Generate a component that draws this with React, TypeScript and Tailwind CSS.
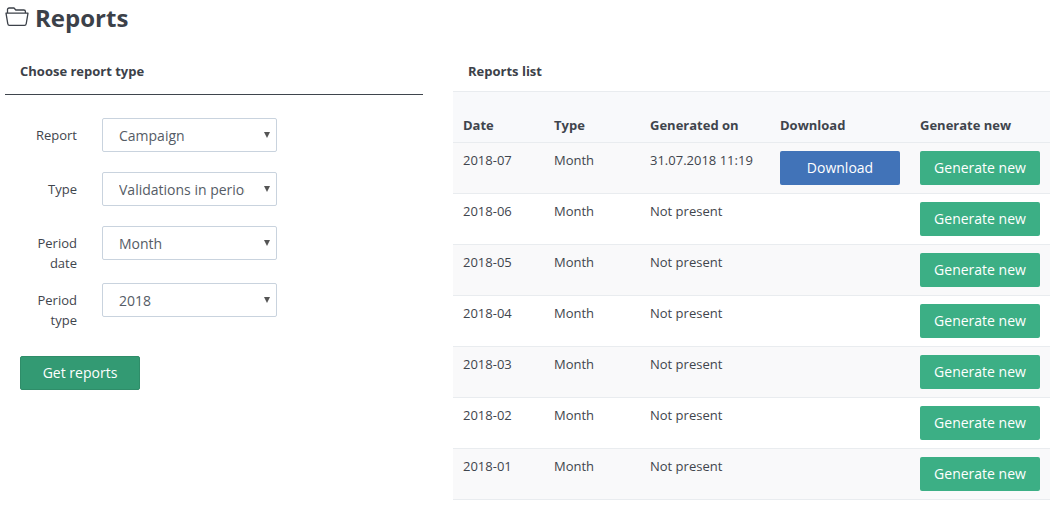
import React from "react";

const font = { fontFamily: '"Open Sans", sans-serif' };

function Folder() {
  return (
    <svg width="24" height="20" viewBox="0 0 24 20" fill="none" stroke="#3c4149" strokeWidth="1.3" className="shrink-0 mb-[4px]">
      <path d="M2.5 6V2.6C2.5 1.7 3.2 1 4.1 1H9L10.8 3H18.8C19.7 3 20.4 3.7 20.4 4.6V6" strokeLinejoin="round" />
      <path d="M1 6.2H23L21.2 16.8C21.1 17.7 20.4 18.4 19.5 18.4H4.5C3.6 18.4 2.9 17.7 2.8 16.8L1 6.2Z" strokeLinejoin="round" />
    </svg>
  );
}

function Field({ label, value, h }: { label: React.ReactNode; value: string; h: string }) {
  return (
    <div className={`flex items-start ${h}`}>
      <label className="w-[72px] text-right text-[13px] leading-[20px] pt-[7px] text-[#3f454d]">{label}</label>
      <div className="relative ml-[25px] w-[175px] h-[34px]">
        <select
          defaultValue={value}
          className="block w-full h-full appearance-none bg-white border border-[#c9d3de] rounded-[2px] pl-[16px] pr-[31px] text-[14px] text-[#555c66] outline-none"
          style={font}
        >
          <option>{value}</option>
        </select>
        <span className="absolute right-[7px] top-[14px] w-0 h-0 border-x-[3px] border-x-transparent border-t-[6px] border-t-[#555]" />
      </div>
    </div>
  );
}

const rows = ["2018-07", "2018-06", "2018-05", "2018-04", "2018-03", "2018-02", "2018-01"];

function Btn({ children, color }: { children: React.ReactNode; color: string }) {
  return (
    <button className={`w-[120px] h-[34px] rounded-[2px] text-white text-[14px] pb-[2px] ${color}`}>{children}</button>
  );
}

export default function App() {
  return (
    <div className="w-[1057px] h-[513px] overflow-hidden bg-white text-[#3f454d] text-[13px]" style={font}>
      <div className="flex items-center h-[38px] pl-[5px] gap-[6px]">
        <Folder />
        <h1 className="text-[24px] font-bold text-[#3c4149] leading-[38px] pb-[3px]">Reports</h1>
      </div>
      <div className="flex pl-[5px] pr-[7px] gap-[30px]">
        <div className="w-[418px]">
          <div className="h-[57px] border-b border-[#3f454d] pl-[15px] pt-[23px] font-bold text-[13px] leading-[20px] text-[#3c4149]">
            Choose report type
          </div>
          <div className="pt-[23px]">
            <Field label="Report" value="Campaign" h="h-[54px]" />
            <Field label="Type" value="Validations in period" h="h-[54px]" />
            <Field label={<>Period<br />date</>} value="Month" h="h-[57px]" />
            <Field label={<>Period<br />type</>} value="2018" h="h-[73px]" />
          </div>
          <button className="ml-[15px] w-[120px] h-[34px] rounded-[2px] bg-[#339a73] border border-[#2f8d69] text-white text-[14px] pb-[2px]">
            Get reports
          </button>
        </div>
        <div className="w-[597px]">
          <div className="h-[53px] pl-[15px] pt-[23px] font-bold text-[13px] leading-[20px] text-[#3c4149]">
            Reports list
          </div>
          <table className="w-[597px] table-fixed border-collapse">
            <colgroup>
              <col className="w-[91px]" />
              <col className="w-[96px]" />
              <col className="w-[130px]" />
              <col className="w-[140px]" />
              <col className="w-[140px]" />
            </colgroup>
            <thead>
              <tr className="h-[51px] bg-[#f8f9fb] border-t border-b border-[#e9ecef]">
                <th className="text-left align-bottom pl-[10px] pb-[8px] font-bold text-[13px] leading-[18px]">Date</th>
                <th className="text-left align-bottom pl-[10px] pb-[8px] font-bold text-[13px] leading-[18px]">Type</th>
                <th className="text-left align-bottom pl-[10px] pb-[8px] font-bold text-[13px] leading-[18px]">Generated on</th>
                <th className="text-left align-bottom pl-[10px] pb-[8px] font-bold text-[13px] leading-[18px]">Download</th>
                <th className="text-left align-bottom pl-[10px] pb-[8px] font-bold text-[13px] leading-[18px]">Generate new</th>
              </tr>
            </thead>
            <tbody>
              {rows.map((r, i) => (
                <tr key={r} className={`h-[51px] border-b border-[#e9ecef] ${i % 2 === 0 ? "bg-[#f9f9fa]" : "bg-white"}`}>
                  <td className="align-top pl-[10px] pt-[8px] leading-[18px]">{r}</td>
                  <td className="align-top pl-[10px] pt-[8px] leading-[18px]">Month</td>
                  <td className="align-top pl-[10px] pt-[8px] leading-[18px]">{i === 0 ? "31.07.2018 11:19" : "Not present"}</td>
                  <td className="align-middle pl-[10px]">{i === 0 && <Btn color="bg-[#4173b8]">Download</Btn>}</td>
                  <td className="align-middle pl-[10px]"><Btn color="bg-[#3caf85]">Generate new</Btn></td>
                </tr>
              ))}
            </tbody>
          </table>
        </div>
      </div>
    </div>
  );
}
